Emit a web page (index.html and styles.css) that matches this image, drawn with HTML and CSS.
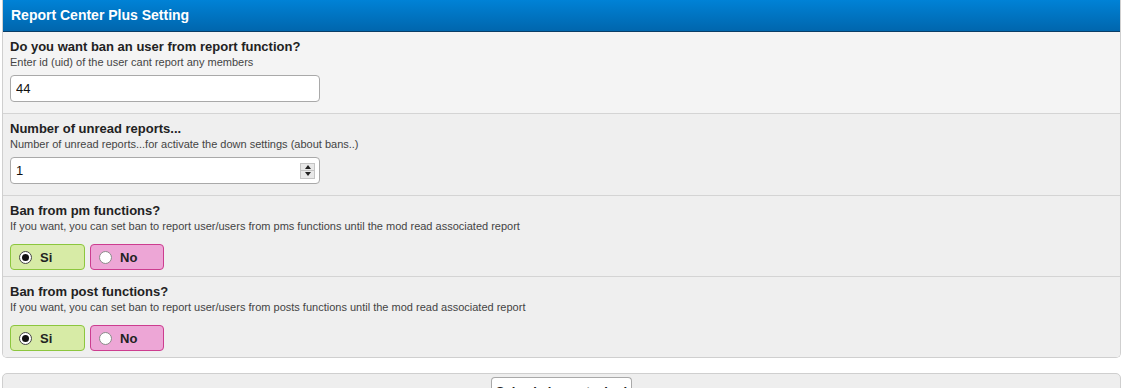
FILE: index.html
```html
<!DOCTYPE html>
<html lang="en">
<head>
    <meta charset="UTF-8">
    <title>Report Center Plus Setting</title>
    <link rel="stylesheet" href="styles.css">
</head>
<body>
    <div class="panel">
        <div class="panel-head">Report Center Plus Setting</div>

        <div class="row row-light">
            <label class="row-title" for="banUid">Do you want ban an user from report function?</label>
            <div class="row-desc">Enter id (uid) of the user cant report any members</div>
            <div class="field">
                <input type="text" id="banUid" value="44">
            </div>
        </div>

        <div class="row">
            <label class="row-title" for="unread">Number of unread reports...</label>
            <div class="row-desc">Number of unread reports...for activate the down settings (about bans..)</div>
            <div class="field">
                <input type="text" id="unread" value="1">
                <span class="spinner">
                    <span class="spin-up"></span>
                    <span class="spin-down"></span>
                </span>
            </div>
        </div>

        <div class="row row-choice">
            <div class="row-title">Ban from pm functions?</div>
            <div class="row-desc">If you want, you can set ban to report user/users from pms functions until the mod read associated report</div>
            <div class="choices">
                <label class="choice choice-yes"><span class="dot checked"></span>Si</label>
                <label class="choice choice-no"><span class="dot"></span>No</label>
            </div>
        </div>

        <div class="row row-choice row-last">
            <div class="row-title">Ban from post functions?</div>
            <div class="row-desc">If you want, you can set ban to report user/users from posts functions until the mod read associated report</div>
            <div class="choices">
                <label class="choice choice-yes"><span class="dot checked"></span>Si</label>
                <label class="choice choice-no"><span class="dot"></span>No</label>
            </div>
        </div>
    </div>

    <div class="panel-foot">
        <button type="button">Salva le impostazioni</button>
    </div>
</body>
</html>
```

FILE: styles.css
```css
* {
    box-sizing: border-box;
}
body {
    margin: 0;
    padding: 0 7px 0 2px;
    background: #ffffff;
    font-family: 'Liberation Sans', Arial, sans-serif;
    color: #222;
}
.panel {
    border: 1px solid #cfcfcf;
    border-top: none;
    border-radius: 0 0 5px 5px;
    overflow: hidden;
}
.panel-head {
    height: 32px;
    padding: 7px 9px 0;
    background: linear-gradient(#0082d6, #0066ad);
    border-bottom: 1px solid #0a3d66;
    color: #ffffff;
    font-size: 14px;
    font-weight: bold;
    margin: 0 -1px;
}
.row {
    background: #efefef;
    padding: 7px 7px 11px;
    border-bottom: 1px solid #d4d4d4;
}
.row-light {
    background: #f4f4f4;
}
.row-choice {
    padding-bottom: 6px;
}
.row-last {
    border-bottom: none;
}
.row-title {
    display: block;
    font-size: 13px;
    font-weight: bold;
    line-height: 16px;
    color: #222;
}
.row-desc {
    font-size: 11px;
    line-height: 14px;
    color: #444;
}
.field {
    display: flex;
    align-items: center;
    width: 310px;
    height: 27px;
    margin-top: 6px;
    background: #ffffff;
    border: 1px solid #a9a9a9;
    border-radius: 4px;
    padding: 0 4px 0 5px;
}
.field input {
    flex: 1;
    border: none;
    outline: none;
    padding: 0;
    font-family: 'Liberation Sans', Arial, sans-serif;
    font-size: 13px;
    color: #111;
    background: transparent;
}
.spinner {
    display: flex;
    flex-direction: column;
    width: 15px;
    height: 16px;
    border: 1px solid #c4c4c4;
    background: #e8e8e8;
}
.spin-up, .spin-down {
    flex: 1;
    display: flex;
    align-items: center;
    justify-content: center;
}
.spin-up {
    border-bottom: 1px solid #c4c4c4;
}
.spin-up::after, .spin-down::after {
    content: '';
    border-left: 3px solid transparent;
    border-right: 3px solid transparent;
}
.spin-up::after {
    border-bottom: 4px solid #222;
}
.spin-down::after {
    border-top: 4px solid #222;
}
.choices {
    display: flex;
    gap: 5px;
    margin-top: 11px;
}
.choice {
    display: flex;
    align-items: center;
    gap: 8px;
    height: 26px;
    width: 75px;
    padding-left: 8px;
    border-radius: 4px;
    font-size: 13px;
    font-weight: bold;
    color: #222;
}
.choice-yes {
    background: #d7eba6;
    border: 1px solid #8cc63e;
}
.choice-no {
    width: 74px;
    background: #eda6d6;
    border: 1px solid #cc3d8f;
}
.dot {
    width: 13px;
    height: 13px;
    border-radius: 50%;
    border: 1px solid #8a8a8a;
    background: #ffffff;
    display: flex;
    align-items: center;
    justify-content: center;
}
.dot.checked {
    border-color: #444;
}
.dot.checked::after {
    content: '';
    width: 7px;
    height: 7px;
    border-radius: 50%;
    background: #111;
}
.panel-foot {
    margin-top: 15px;
    height: 40px;
    background: #eeeeee;
    border: 1px solid #cfcfcf;
    border-radius: 5px;
    display: flex;
    justify-content: center;
    align-items: flex-start;
    padding-top: 3px;
}
.panel-foot button {
    width: 141px;
    height: 27px;
    background: #ffffff;
    border: 1px solid #a9a9a9;
    border-bottom: none;
    border-radius: 4px 4px 0 0;
    font-family: 'Liberation Sans', Arial, sans-serif;
    font-size: 13px;
    font-weight: bold;
    color: #222;
    white-space: nowrap;
    padding: 0;
}
```
